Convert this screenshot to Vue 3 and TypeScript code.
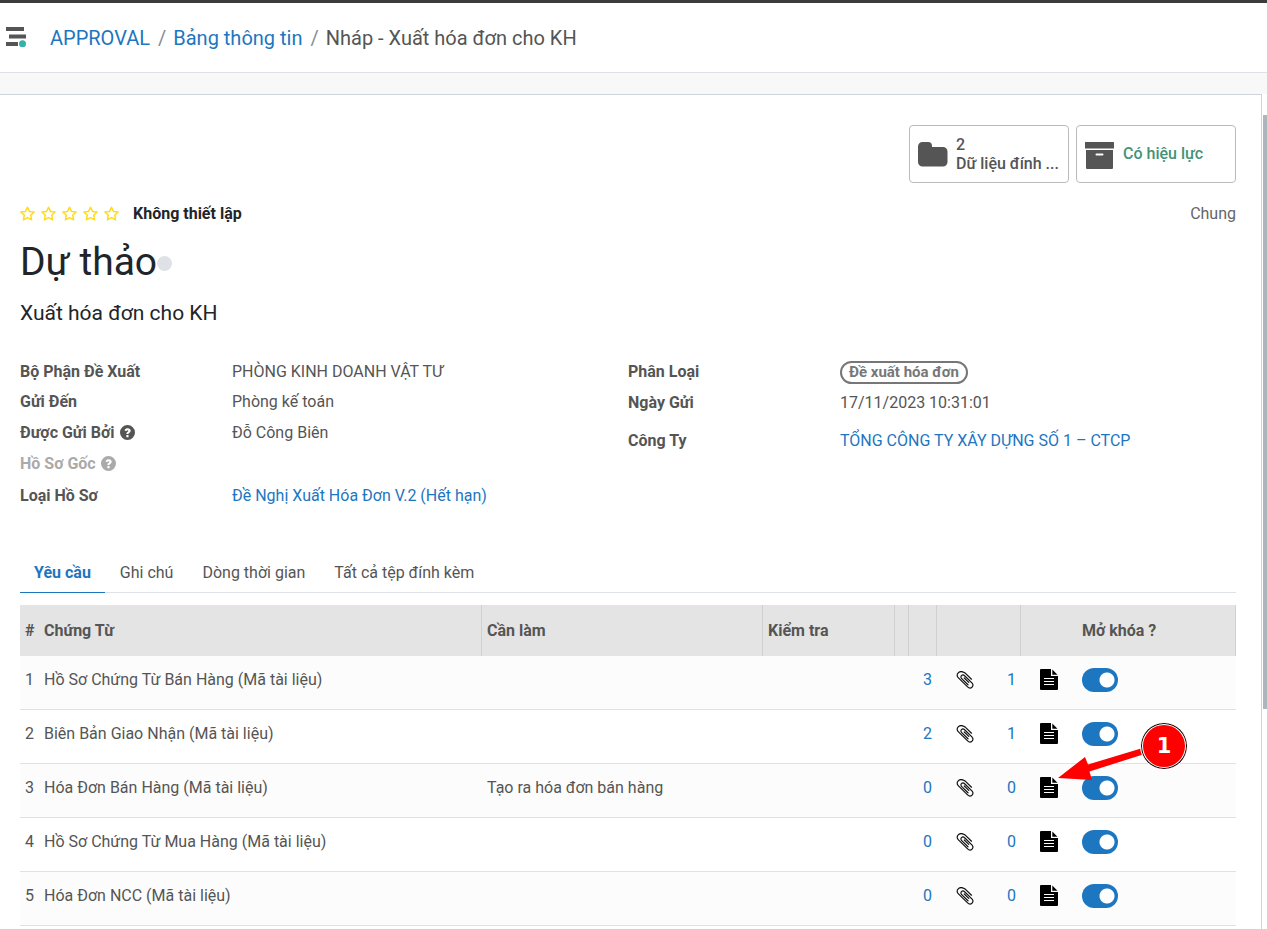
<script setup lang="ts">
import { ref } from 'vue'

interface Row {
  name: string
  todo: string
  files: number
  docs: number
  open: boolean
  marked?: boolean
}

const rows = ref<Row[]>([
  { name: 'Hồ Sơ Chứng Từ Bán Hàng (Mã tài liệu)', todo: '', files: 3, docs: 1, open: true },
  { name: 'Biên Bản Giao Nhận (Mã tài liệu)', todo: '', files: 2, docs: 1, open: true },
  { name: 'Hóa Đơn Bán Hàng (Mã tài liệu)', todo: 'Tạo ra hóa đơn bán hàng', files: 0, docs: 0, open: true, marked: true },
  { name: 'Hồ Sơ Chứng Từ Mua Hàng (Mã tài liệu)', todo: '', files: 0, docs: 0, open: true },
  { name: 'Hóa Đơn NCC (Mã tài liệu)', todo: '', files: 0, docs: 0, open: true },
])

const tabs = ['Yêu cầu', 'Ghi chú', 'Dòng thời gian', 'Tất cả tệp đính kèm']
const activeTab = ref(0)
</script>

<template>
  <div class="page">
    <header class="topbar">
      <button class="icon-btn" aria-label="Menu">
        <svg width="20" height="22" viewBox="0 0 20 22">
          <path fill="#555" d="M0 0h18v4H0zM3 7.500h17v4H3zM0 15h12v4H0z" />
          <circle cx="16.500" cy="16.700" r="3.500" fill="#35b0ab" />
        </svg>
      </button>
      <nav class="crumbs">
        <a href="#">APPROVAL</a><span class="sep">/</span><a href="#">Bảng thông tin</a><span class="sep">/</span><span>Nháp - Xuất hóa đơn cho KH</span>
      </nav>
    </header>

    <div class="body">
      <main class="sheet">
        <div class="stats">
          <button class="stat">
            <svg width="30" height="28" viewBox="0 0 30 28">
              <path fill="#555" d="M4.500 2h5.500a4 4 0 0 1 4 4v1h11a4.500 4.500 0 0 1 4.500 4.500v10.500a4.500 4.500 0 0 1-4.500 4.500H4.500A4.500 4.500 0 0 1 0 22v-15.500A4.500 4.500 0 0 1 4.500 2z" />
            </svg>
            <span class="stat-text"><span>2</span><span>Dữ liệu đính ...</span></span>
          </button>
          <button class="stat">
            <svg width="30" height="32" viewBox="0 0 30 32">
              <path fill="#555" fill-rule="evenodd" d="M1 4h27.500a.6.6 0 0 1 .5.600v6H0v-6A.6.6 0 0 1 1 4zM1 12h27v18a1 1 0 0 1-1 1H2a1 1 0 0 1-1-1zM11.500 15.500a1 1 0 0 0 0 2h6a1 1 0 0 0 0-2z" />
            </svg>
            <span class="stat-text green">Có hiệu lực</span>
          </button>
        </div>

        <div class="rating">
          <span class="stars">
            <svg v-for="n in 5" :key="n" width="16" height="16" viewBox="0 0 16 16">
              <path fill="none" stroke="#ffdb1a" stroke-width="1.500" stroke-linejoin="round" d="M7.500 1.200l2 4.200 4.600.6-3.400 3.200.9 4.600L7.500 11.600l-4.100 2.200.9-4.600L.9 6l4.600-.6z" />
            </svg>
          </span>
          <strong>Không thiết lập</strong>
          <span class="scope">Chung</span>
        </div>

        <h1>Dự thảo<i class="dot"></i></h1>
        <p class="subtitle">Xuất hóa đơn cho KH</p>

        <div class="groups">
          <dl>
            <div><dt>Bộ Phận Đề Xuất</dt><dd>PHÒNG KINH DOANH VẬT TƯ</dd></div>
            <div class="mid"><dt>Gửi Đến</dt><dd>Phòng kế toán</dd></div>
            <div class="mid">
              <dt>Được Gửi Bởi
                <svg class="help" width="15" height="15" viewBox="0 0 16 16"><path fill="currentColor" fill-rule="evenodd" d="M8 0a8 8 0 1 1 0 16A8 8 0 0 1 8 0zM4.800 5.500l1.700 1.200C7.100 6 7.500 5.700 8 5.700c.6 0 1 .3 1 .7 0 .9-2.200 1-2.200 2.900v.4h2.200c0-1.200 2.400-1.400 2.400-3.500C11.400 4.700 9.900 3.500 8.200 3.500c-1.500 0-2.600.7-3.400 2zM6.800 10.700h2.300V13H6.800z" /></svg>
              </dt>
              <dd>Đỗ Công Biên</dd>
            </div>
            <div class="muted">
              <dt>Hồ Sơ Gốc
                <svg class="help" width="15" height="15" viewBox="0 0 16 16"><path fill="currentColor" fill-rule="evenodd" d="M8 0a8 8 0 1 1 0 16A8 8 0 0 1 8 0zM4.800 5.500l1.700 1.200C7.100 6 7.500 5.700 8 5.700c.6 0 1 .3 1 .7 0 .9-2.200 1-2.200 2.900v.4h2.200c0-1.200 2.400-1.400 2.400-3.500C11.400 4.700 9.900 3.500 8.200 3.500c-1.500 0-2.600.7-3.400 2zM6.800 10.700h2.300V13H6.800z" /></svg>
              </dt>
              <dd></dd>
            </div>
            <div><dt>Loại Hồ Sơ</dt><dd><a href="#">Đề Nghị Xuất Hóa Đơn V.2 (Hết hạn)</a></dd></div>
          </dl>
          <dl>
            <div class="mid"><dt>Phân Loại</dt><dd><span class="tag">Đề xuất hóa đơn</span></dd></div>
            <div class="tall"><dt>Ngày Gửi</dt><dd>17/11/2023 10:31:01</dd></div>
            <div><dt>Công Ty</dt><dd><a href="#">TỔNG CÔNG TY XÂY DỰNG SỐ 1 – CTCP</a></dd></div>
          </dl>
        </div>

        <div class="tabs" role="tablist">
          <button v-for="(tab, i) in tabs" :key="tab" role="tab" :aria-selected="i === activeTab" :class="{ active: i === activeTab }" @click="activeTab = i">{{ tab }}</button>
        </div>

        <table>
          <colgroup>
            <col class="c-num" /><col /><col class="c-todo" /><col class="c-check" /><col class="c-gap" /><col class="c-count" /><col class="c-icon" /><col class="c-count" /><col class="c-icon" /><col class="c-lock" />
          </colgroup>
          <thead>
            <tr>
              <th>#</th><th class="line">Chứng Từ</th><th class="line">Cần làm</th><th class="line">Kiểm tra</th><th class="line"></th><th class="line"></th><th></th><th class="line"></th><th></th><th class="line">Mở khóa ?</th>
            </tr>
          </thead>
          <tbody>
            <tr v-for="(row, i) in rows" :key="row.name">
              <td>{{ i + 1 }}</td>
              <td>{{ row.name }}</td>
              <td>{{ row.todo }}</td>
              <td></td>
              <td></td>
              <td class="count">{{ row.files }}</td>
              <td class="icon">
                <button class="icon-btn" aria-label="Tệp đính kèm">
                  <svg width="18" height="18" viewBox="0 0 18 18">
                    <path fill="none" stroke="#111" stroke-width="1.200" stroke-linecap="round" d="M15.500 8.200L9 1.900M8.900 1.900L7.600 1.200C6 .4 3.700.3 2.200 1.900.7 3.400.9 5.300 2.200 6.600l9.400 9.300c1.500 1.500 3.400 1.300 4.500.2 1.200-1.200 1.200-2.900-.2-4.300L8.600 4.700C7.500 3.700 6.200 3.900 5.500 4.600c-.8.800-.8 2 .2 3l6.300 6.200M12.800 11.400L8.300 7" />
                  </svg>
                </button>
              </td>
              <td class="count">{{ row.docs }}</td>
              <td class="icon">
                <button class="icon-btn" aria-label="Tài liệu">
                  <svg width="18" height="22" viewBox="0 0 18 22">
                    <path d="M1 0h10v7h7v13a1 1 0 0 1-1 1H1a1 1 0 0 1-1-1V1a1 1 0 0 1 1-1z" />
                    <path d="M12.300 0.500L17.500 5.700h-5.200z" />
                    <path stroke="#fff" stroke-width="1" d="M4 9.500h10M4 12.500h10M4 15.500h10" />
                  </svg>
                </button>
                <span v-if="row.marked" class="callout">
                  <svg width="86" height="58" viewBox="0 0 86 58">
                    <path fill="red" d="M0 56L27 35l3 7.500L83 26.500l2 6L31.500 49.500l2.500 8.500z" />
                  </svg>
                  <b>1</b>
                </span>
              </td>
              <td><input v-model="row.open" type="checkbox" class="switch" :aria-label="'Mở khóa ' + row.name" /></td>
            </tr>
          </tbody>
        </table>
      </main>
      <div class="track"><div class="thumb"></div></div>
    </div>
  </div>
</template>

<style>
body {
  overflow: hidden;
}
</style>

<style scoped>
* {
  box-sizing: border-box;
}
.page {
  display: flex;
  flex-direction: column;
  min-height: 100vh;
  border-top: 3px solid #3c3c3c;
  background: #f8f8f8;
  color: #555;
  font: 16px/24px Roboto, "Noto Sans", sans-serif;
}
a {
  color: #1d76c0;
  text-decoration: none;
}
button {
  font: inherit;
  color: inherit;
}
.icon-btn {
  display: inline-flex;
  padding: 0;
  border: 0;
  background: none;
  vertical-align: middle;
  cursor: pointer;
}
.topbar {
  display: flex;
  align-items: center;
  gap: 24px;
  height: 70px;
  padding: 0 6px;
  border-bottom: 1px solid #dee2e6;
  background: #fff;
}
.crumbs {
  font-size: 20px;
}
.sep {
  margin: 0 7px 0 8px;
  color: #868e96;
}
.body {
  display: flex;
  flex: 1;
  padding-top: 21px;
}
.sheet {
  flex: 1;
  min-width: 0;
  padding: 30px 25px 0 20px;
  border: solid #ced4da;
  border-width: 1px 1px 0 0;
  background: #fff;
}
.track {
  width: 5px;
  padding-top: 21px;
  background: #fff;
}
.thumb {
  width: 4px;
  height: 73%;
  margin-left: 1px;
  background: #adb5bd;
}
.stats {
  display: flex;
  justify-content: flex-end;
  gap: 7px;
}
.stat {
  display: flex;
  align-items: center;
  gap: 8px;
  width: 160px;
  height: 58px;
  padding: 0 0 0 8px;
  border: 1px solid #bbb;
  border-radius: 4px;
  background: #fff;
  text-align: left;
  white-space: nowrap;
  font-weight: 500;
}
.stat svg {
  flex: none;
}
.stat-text {
  display: flex;
  flex-direction: column;
  line-height: 19px;
}
.green {
  padding-bottom: 2px;
  color: #449277;
}
.rating {
  display: flex;
  align-items: center;
  margin-top: 19px;
  color: #212529;
}
.stars {
  display: flex;
  gap: 5px;
  margin-right: 13px;
}
.scope {
  margin-left: auto;
  color: #666;
}
h1 {
  display: flex;
  align-items: center;
  margin: 12px 0 0;
  color: #212529;
  font-size: 39px;
  line-height: 48px;
  font-weight: 400;
}
.dot {
  width: 15px;
  height: 15px;
  margin-top: 3px;
  border-radius: 50%;
  background: #dee2e6;
}
.subtitle {
  margin: 15px 0 0;
  color: #212529;
  font-size: 21px;
  line-height: 24px;
}
.groups {
  display: grid;
  grid-template-columns: 1fr 1fr;
  margin-top: 35px;
}
dl {
  margin: 0;
}
dl > div {
  display: flex;
  min-height: 30px;
}
dl > .mid {
  min-height: 31px;
}
dl > .tall {
  min-height: 38px;
}
dt {
  flex: none;
  width: 212px;
  font-weight: 700;
}
dd {
  margin: 0;
}
.help {
  margin-left: 1px;
  vertical-align: -2px;
}
.muted {
  color: #aaa;
}
dl > .muted {
  min-height: 32px;
}
.tag {
  display: inline-block;
  padding: 0 7px;
  border: 2px solid #777;
  border-radius: 12px;
  color: #777;
  font-size: 15px;
  line-height: 19px;
  font-weight: 700;
}
.tabs {
  display: flex;
  gap: 1px;
  margin-top: 39px;
  border-bottom: 1px solid #dee2e6;
}
.tabs button {
  height: 40px;
  margin-bottom: -1px;
  padding: 0 14px;
  border: 0;
  border-bottom: 1px solid transparent;
  background: none;
}
.tabs .active {
  border-color: #1d76c0;
  color: #1d76c0;
  font-weight: 700;
}
table {
  width: 100%;
  margin-top: 12px;
  border-collapse: separate;
  border-spacing: 0;
  table-layout: fixed;
}
.c-num {
  width: 19px;
}
.c-todo {
  width: 281px;
}
.c-check {
  width: 132px;
}
.c-gap {
  width: 14px;
}
.c-count {
  width: 28px;
}
.c-icon {
  width: 56px;
}
.c-lock {
  width: 159px;
}
th {
  height: 51px;
  padding: 0 4px 0 5px;
  background: #e4e4e4;
  text-align: left;
  font-weight: 700;
}
.line {
  border-right: 1px solid #ced0d2;
}
td {
  height: 54px;
  padding: 0 5px 6px;
  border-bottom: 1px solid #dee2e6;
}
tbody tr:nth-child(odd) {
  background: #fcfcfc;
}
.count {
  color: #1d76c0;
  text-align: right;
}
.icon {
  position: relative;
  text-align: center;
}
.icon svg {
  display: block;
}
.switch {
  display: block;
  width: 36px;
  height: 24px;
  margin: 0;
  border-radius: 12px;
  appearance: none;
  background: radial-gradient(circle at 25px 12px, #fff 7px, #1d76c0 8px);
}
.switch:not(:checked) {
  background: radial-gradient(circle at 11px 12px, #fff 7px, #aaa 8px);
}
.callout {
  position: absolute;
  z-index: 1;
  left: 37px;
  top: -42px;
}
.callout b {
  position: absolute;
  left: 82px;
  top: 0;
  width: 48px;
  height: 48px;
  border: 1px solid #fff;
  border-radius: 50%;
  box-shadow: inset 0 0 0 1px #000, inset 0 0 0 2px #fff;
  background: red;
  color: #fff;
  font: 700 21px/46px "DejaVu Sans", sans-serif;
  text-align: center;
}
</style>
